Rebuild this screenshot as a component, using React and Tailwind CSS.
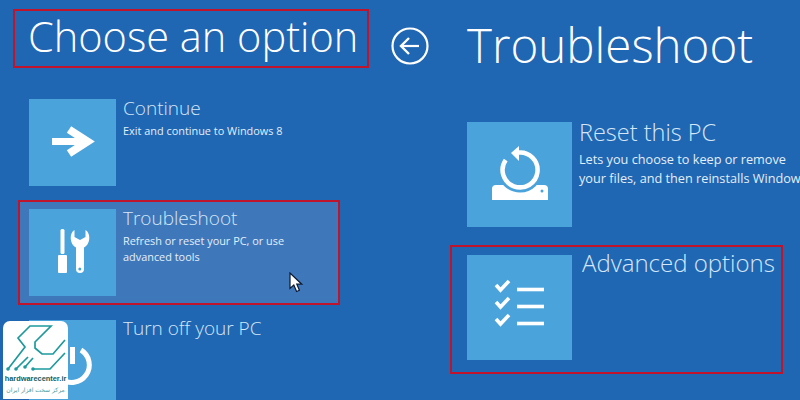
import React from 'react';

const sans = 'font-["Open_Sans","Noto_Sans",sans-serif]';

const ArrowIcon = () => (
  <svg width="87" height="87" fill="none" stroke="#fff" strokeWidth="7">
    <path d="M23 42.5H58" />
    <path d="M40 30.5L58.5 42.5L40 54.5" strokeWidth="8" />
  </svg>
);

const ToolsIcon = () => (
  <svg width="87" height="87" fill="#fff">
    <rect x="31.5" y="20" width="4" height="25" rx="1.5" />
    <rect x="29" y="46" width="9" height="18" rx="1" />
    <path d="M45.5 21C40 24 40.5 35 47 38.5V60a4 4 0 0 0 8 0V38.5C61.5 35 62 24 56.5 21V28L51 31L45.5 28Z" />
    <circle cx="50.8" cy="60" r="1.5" fill="#4ba3dc" />
  </svg>
);

const PowerIcon = () => (
  <svg width="87" height="87" fill="none" stroke="#fff" strokeWidth="5">
    <path d="M43.5 27V44" />
    <path d="M52 30A17.5 17.5 0 1 1 30 33" />
  </svg>
);

const ResetIcon = () => (
  <svg width="105" height="105" fill="none">
    <path d="M25 78V67Q25 63 29 63H77Q81 63 81 67V78Z" fill="#fff" />
    <circle cx="75" cy="69" r="1.5" fill="#4ba3dc" />
    <circle cx="53" cy="48" r="20" stroke="#4ba3dc" strokeWidth="5" />
    <path d="M51 30.6A17.5 17.5 0 1 1 38.7 38" stroke="#fff" strokeWidth="4.5" />
    <path d="M44 31L52 24V39Z" fill="#fff" />
  </svg>
);

const ChecklistIcon = () => (
  <svg width="105" height="105" fill="none" stroke="#fff" strokeWidth="3.6">
    {[0, 17, 34].map((y) => (
      <g key={y}>
        <path d={`M29 ${y + 30}L33.5 ${y + 35}L42 ${y + 26}`} />
        <path d={`M50 ${y + 34.5}H77`} />
      </g>
    ))}
  </svg>
);

const BackIcon = () => (
  <svg width="38" height="38" fill="none" stroke="#fff">
    <circle cx="19" cy="19" r="17.5" strokeWidth="2.2" />
    <path d="M10 19H28" strokeWidth="2.2" />
    <path d="M18 11L10 19L18 27" strokeWidth="2.4" />
  </svg>
);

const Cursor = () => (
  <svg className="absolute left-[289px] top-[272px]" width="15" height="21">
    <path d="M1 1V16.5L4.8 13L7.6 19.5L10.4 18.3L7.8 12.2H12.8Z" fill="#fff" stroke="#0b1a33" strokeWidth="1.2" />
  </svg>
);

const Logo = () => (
  <div className="absolute left-[3px] top-[321px] w-[65px] h-[78px] bg-white rounded-tl-[7px] rounded-tr-[7px] flex flex-col items-center overflow-hidden">
    <svg className="shrink-0" width="65" height="52" fill="none" stroke="#1d9a9c" strokeWidth="1.7">
      <path d="M5 48L22 26L15 17L27 5H48L32 21V27L39 33H50L62 19" />
      <path d="M13 48L25 36" />
      <path d="M22 46L30 37" />
      <path d="M30 48H47L62 32" />
      <g fill="#1d9a9c" stroke="none">
        <circle cx="5" cy="48" r="1.8" />
        <circle cx="13" cy="48" r="1.8" />
        <circle cx="22" cy="46" r="1.8" />
        <circle cx="30" cy="48" r="1.8" />
      </g>
    </svg>
    <div className='font-["Liberation_Sans",sans-serif] text-[7.4px] leading-[11px] font-bold text-[#12605f] whitespace-nowrap'>hardwarecenter.ir</div>
    <div dir="rtl" className='font-["DejaVu_Sans",sans-serif] text-[6px] leading-[11px] text-[#4a9a9a] whitespace-nowrap'>مرکز سخت افزار ایران</div>
  </div>
);

const Option = ({ size, icon, title, textClass, titleClass, lines, subClass }) => (
  <div className="flex items-start">
    <div className={`${size} shrink-0 bg-[#4ba3dc]`}>{icon}</div>
    <div className={`whitespace-nowrap ${textClass}`}>
      <div className={`font-light text-[#d5e6f6] ${titleClass}`}>{title}</div>
      {lines && lines.map((l) => (
        <div key={l} className={`text-[#e3eff9] ${subClass}`}>{l}</div>
      ))}
    </div>
  </div>
);

const smallTile = 'w-[87px] h-[87px]';
const bigTile = 'w-[105px] h-[105px]';
const leftTitle = 'text-[19px] leading-[20px] -mt-px mb-[5px]';
const leftSub = 'text-[10.9px] leading-[16px]';
const rightSub = 'text-[12.7px] leading-[19px]';

export default function App() {
  return (
    <div className={`${sans} relative w-[800px] h-[400px] overflow-hidden bg-[#1f66b3] text-white flex`}>
      <div className="w-[380px] shrink-0 pl-[13px] pt-[9px]">
        <div className="w-[356px] h-[59px] border-2 border-[#c0142c] pl-[13px] pb-[3px] flex items-center">
          <h1 className="font-light text-[41.5px] leading-none whitespace-nowrap">Choose an option</h1>
        </div>
        <div className="ml-[16px] mt-[31px]">
          <Option size={smallTile} icon={<ArrowIcon />} title="Continue" textClass="ml-[7px]" titleClass={leftTitle} lines={['Exit and continue to Windows 8']} subClass={leftSub} />
        </div>
        <div className="ml-[5px] mt-[14px] w-[322px] h-[105px] bg-[#3e78bb] border-2 border-[#c0142c] pl-[9px] pt-[7px]">
          <Option size={smallTile} icon={<ToolsIcon />} title="Troubleshoot" textClass="ml-[7px]" titleClass={leftTitle} lines={['Refresh or reset your PC, or use', 'advanced tools']} subClass={leftSub} />
        </div>
        <div className="ml-[16px] mt-[15px]">
          <Option size={smallTile} icon={<PowerIcon />} title="Turn off your PC" textClass="ml-[7px]" titleClass="text-[19px] leading-[20px] -mt-[2px]" />
        </div>
      </div>

      <div className="w-[38px] shrink-0 ml-[11px] mt-[27px]">
        <BackIcon />
      </div>

      <div className="ml-[21px] pt-[15px] min-w-0">
        <h1 className="pl-[17px] font-light text-[47.5px] leading-[60px] whitespace-nowrap">Troubleshoot</h1>
        <div className="ml-[17px] mt-[47px]">
          <Option size={bigTile} icon={<ResetIcon />} title="Reset this PC" textClass="ml-[7px]" titleClass="text-[23.5px] leading-[24px] -mt-[2px] mb-[6px]" lines={['Lets you choose to keep or remove', 'your files, and then reinstalls Windows']} subClass={rightSub} />
        </div>
        <div className="mt-[18px] w-[333px] h-[129px] border-2 border-[#c0142c] pl-[15px] pt-[8px]">
          <Option size={bigTile} icon={<ChecklistIcon />} title="Advanced options" textClass="ml-[10px]" titleClass="text-[24px] leading-[24px] -mt-[4px]" />
        </div>
      </div>

      <Cursor />
      <Logo />
    </div>
  );
}
